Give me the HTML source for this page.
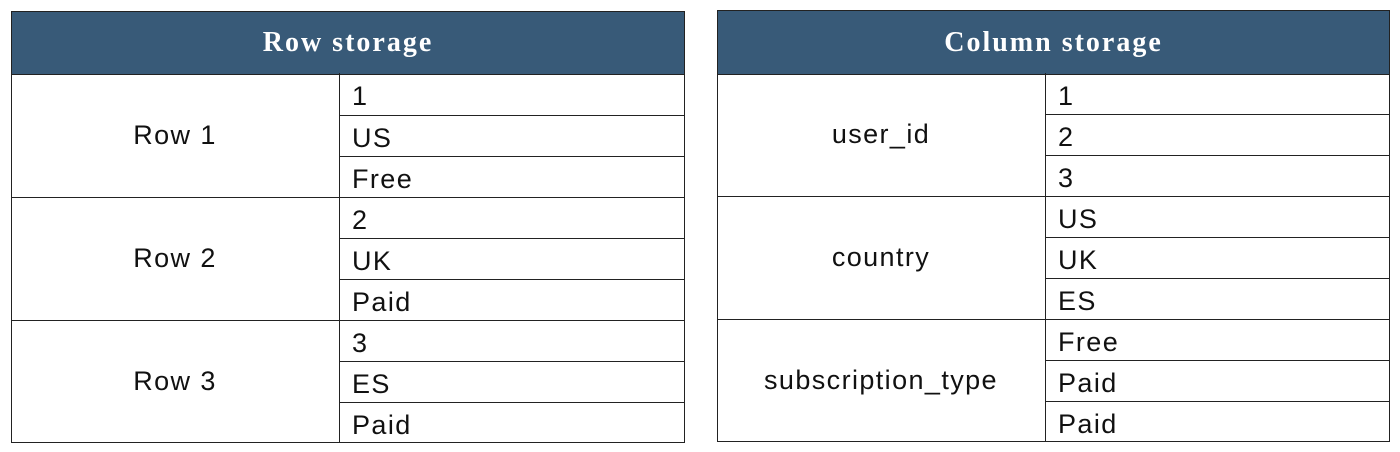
<html><head><style>
body{margin:0;width:1400px;height:452px;background:#fff;position:relative;font-family:"Liberation Sans",sans-serif;overflow:hidden}
.t{position:absolute;border:1.5px solid #222;box-sizing:border-box}
.h{position:absolute;left:0;right:0;top:0;height:62px;background:#385a78;color:#fff;font:bold 28px "Liberation Serif",serif;letter-spacing:2px;text-align:center;line-height:62px;border-bottom:1.5px solid #222}
.l{position:absolute;font-size:27px;letter-spacing:1.4px;color:#111;white-space:nowrap}
.hl{position:absolute;height:0;border-top:1.5px solid #222}
.vl{position:absolute;width:0;border-left:1.5px solid #222}
</style></head><body>
<div class="t" style="left:11px;top:11px;width:674px;height:432px">
<div class="h">Row storage</div></div>
<div class="t" style="left:717px;top:10px;width:673px;height:432px">
<div class="h" style="height:63px;line-height:63px">Column storage</div></div>
<div class="vl" style="left:339px;top:73px;height:369px"></div>
<div class="vl" style="left:1045px;top:73px;height:368px"></div>
<div id="x"></div>
<script>
var L=[115,156,197,238,279,320,361,402],R=[114,155,196,237,278,319,360,401];
var s='';
L.forEach(y=>s+=`<div class="hl" style="top:${y}px;left:${[197,320].includes(y)?11:339}px;width:${[197,320].includes(y)?674:346}px"></div>`);
R.forEach(y=>s+=`<div class="hl" style="top:${y}px;left:${[196,319].includes(y)?717:1045}px;width:${[196,319].includes(y)?673:345}px"></div>`);
var lv=['1','US','Free','2','UK','Paid','3','ES','Paid'],rv=['1','2','3','US','UK','ES','Free','Paid','Paid'];
var lt=[73].concat(L),rt=[73].concat(R);
lv.forEach((v,i)=>s+=`<div class="l" style="left:352px;top:${lt[i]+8}px">${v}</div>`);
rv.forEach((v,i)=>s+=`<div class="l" style="left:1058px;top:${rt[i]+8}px">${v}</div>`);
[['Row 1',135],['Row 2',258],['Row 3',381]].forEach(a=>s+=`<div class="l" style="left:11px;width:328px;text-align:center;top:${a[1]-15}px">${a[0]}</div>`);
[['user_id',134],['country',257],['subscription_type',380]].forEach(a=>s+=`<div class="l" style="left:717px;width:328px;text-align:center;top:${a[1]-15}px">${a[0]}</div>`);
document.getElementById('x').innerHTML=s;
</script>
</body></html>
